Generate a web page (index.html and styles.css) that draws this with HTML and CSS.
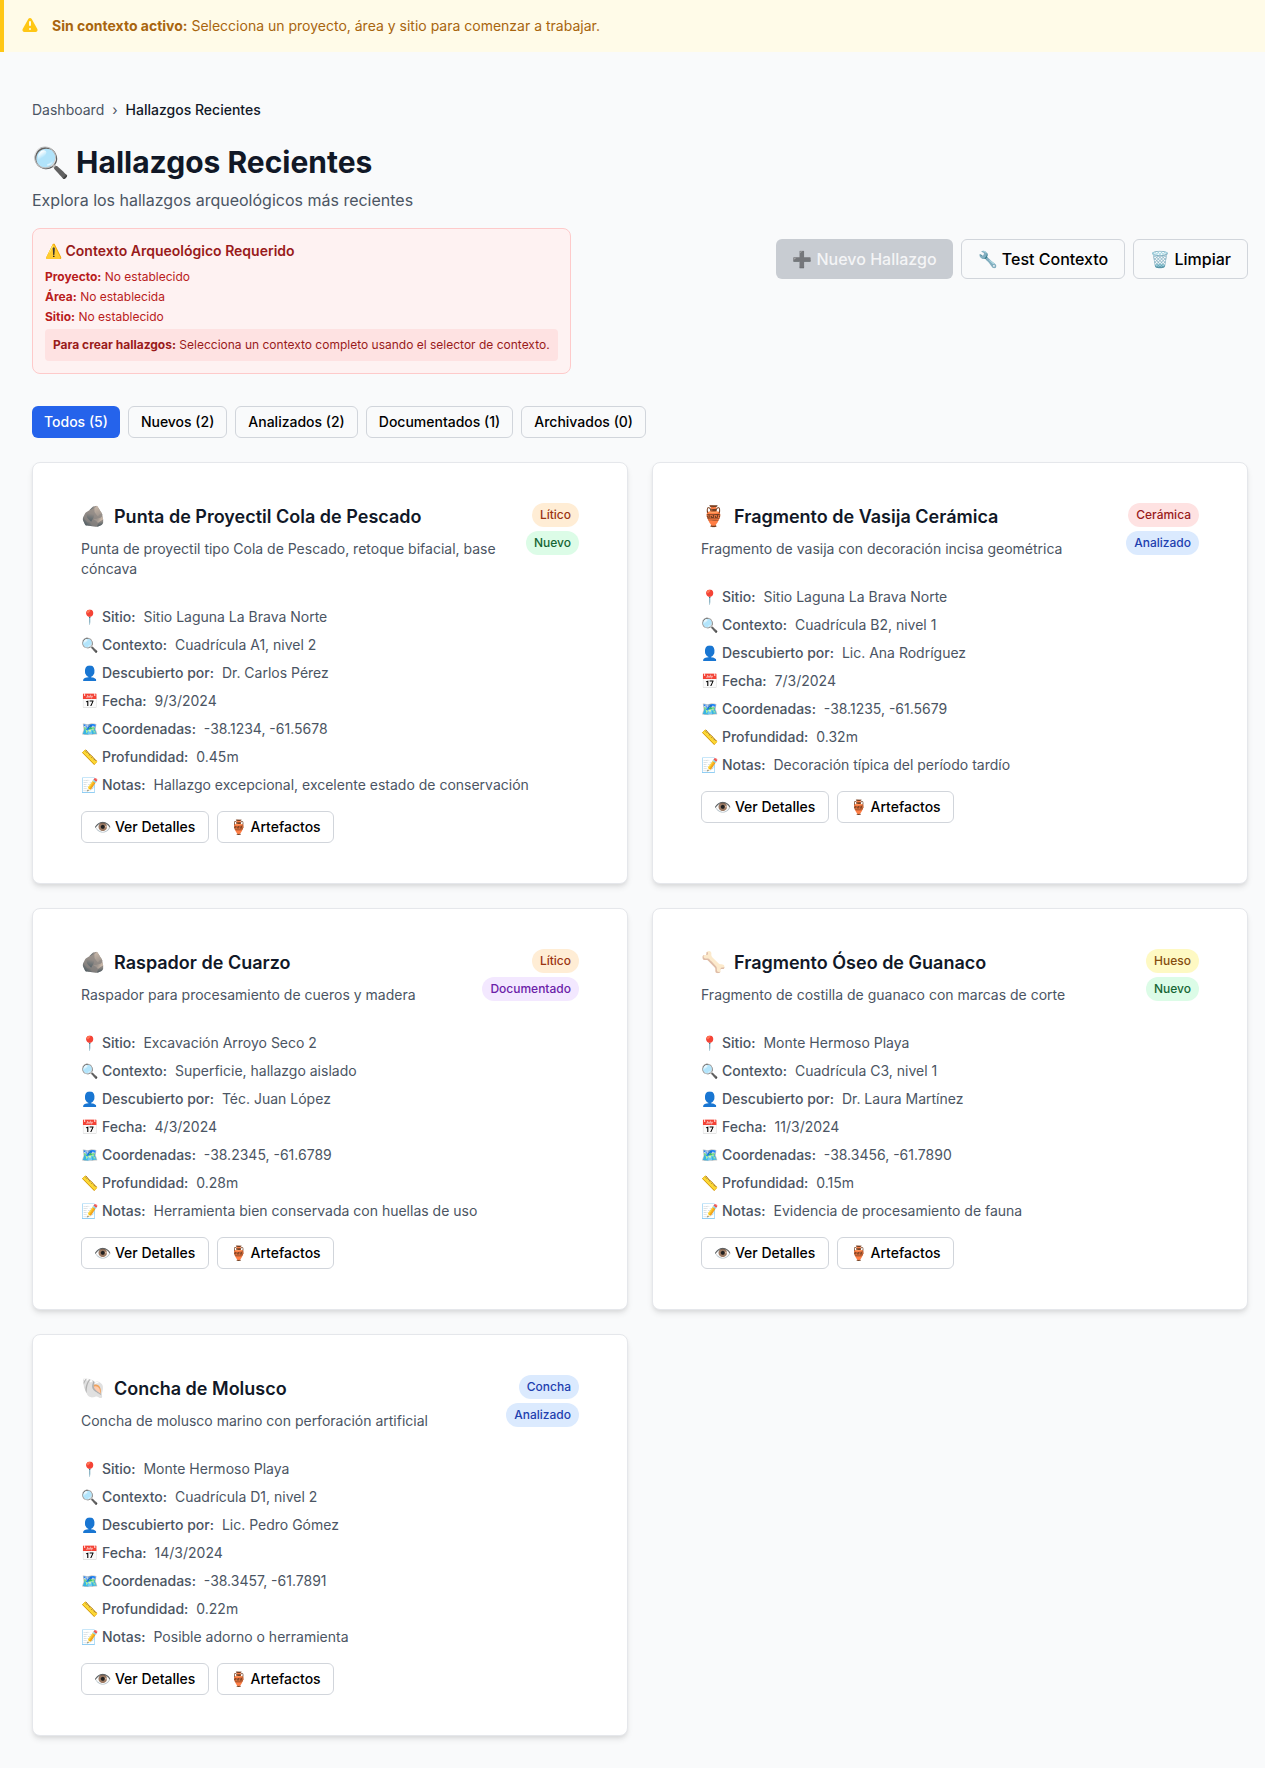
FILE: index.html
```html
<!DOCTYPE html>
<html lang="es">
<head>
<meta charset="utf-8">
<title>Hallazgos Recientes</title>
<link rel="stylesheet" href="styles.css">
</head>
<body>
<div class="banner">
  <svg class="banner-icon" viewBox="0 0 20 20" width="20" height="20"><path fill="#ffc715" d="M8.26 3.1c.76-1.36 2.72-1.36 3.48 0l5.58 9.92c.75 1.34-.21 2.98-1.74 2.98H4.42c-1.53 0-2.49-1.64-1.74-2.98L8.26 3.1zM11 13a1 1 0 1 1-2 0 1 1 0 0 1 2 0zm-1-8a1 1 0 0 0-1 1v3a1 1 0 1 0 2 0V6a1 1 0 0 0-1-1z" fill-rule="evenodd"/></svg>
  <p><strong>Sin contexto activo:</strong> Selecciona un proyecto, área y sitio para comenzar a trabajar.</p>
</div>
<main class="page">
  <nav class="crumbs"><span>Dashboard</span><span class="sep">›</span><span class="current">Hallazgos Recientes</span></nav>
  <header class="head">
    <h1>🔍 Hallazgos Recientes</h1>
    <p class="sub">Explora los hallazgos arqueológicos más recientes</p>
    <div class="head-row">
      <section class="alert">
        <h3>⚠️ Contexto Arqueológico Requerido</h3>
        <p><b>Proyecto:</b> No establecido</p>
        <p><b>Área:</b> No establecida</p>
        <p><b>Sitio:</b> No establecido</p>
        <div class="alert-note"><b>Para crear hallazgos:</b> Selecciona un contexto completo usando el selector de contexto.</div>
      </section>
      <div class="actions">
        <button class="btn-lg disabled"><span class="fade">➕ Nuevo Hallazgo</span></button>
        <button class="btn-lg">🔧 Test Contexto</button>
        <button class="btn-lg">🗑️ Limpiar</button>
      </div>
    </div>
  </header>
  <div class="tabs">
    <button class="tab active">Todos (5)</button>
    <button class="tab">Nuevos (2)</button>
    <button class="tab">Analizados (2)</button>
    <button class="tab">Documentados (1)</button>
    <button class="tab">Archivados (0)</button>
  </div>
  <div class="grid">

    <article class="card">
      <div class="card-head">
        <div class="card-title">
          <h3><span class="ico">🪨</span>Punta de Proyectil Cola de Pescado</h3>
          <p>Punta de proyectil tipo Cola de Pescado, retoque bifacial, base cóncava</p>
        </div>
        <div class="badges"><span class="badge lit">Lítico</span><span class="badge new">Nuevo</span></div>
      </div>
      <ul class="facts">
        <li>📍 <b>Sitio:</b> Sitio Laguna La Brava Norte</li>
        <li>🔍 <b>Contexto:</b> Cuadrícula A1, nivel 2</li>
        <li>👤 <b>Descubierto por:</b> Dr. Carlos Pérez</li>
        <li>📅 <b>Fecha:</b> 9/3/2024</li>
        <li>🗺️ <b>Coordenadas:</b> -38.1234, -61.5678</li>
        <li>📏 <b>Profundidad:</b> 0.45m</li>
        <li>📝 <b>Notas:</b> Hallazgo excepcional, excelente estado de conservación</li>
      </ul>
      <div class="card-actions"><button class="btn-sm">👁️ Ver Detalles</button><button class="btn-sm">🏺 Artefactos</button></div>
    </article>

    <article class="card">
      <div class="card-head">
        <div class="card-title">
          <h3><span class="ico">🏺</span>Fragmento de Vasija Cerámica</h3>
          <p>Fragmento de vasija con decoración incisa geométrica</p>
        </div>
        <div class="badges"><span class="badge cer">Cerámica</span><span class="badge ana">Analizado</span></div>
      </div>
      <ul class="facts">
        <li>📍 <b>Sitio:</b> Sitio Laguna La Brava Norte</li>
        <li>🔍 <b>Contexto:</b> Cuadrícula B2, nivel 1</li>
        <li>👤 <b>Descubierto por:</b> Lic. Ana Rodríguez</li>
        <li>📅 <b>Fecha:</b> 7/3/2024</li>
        <li>🗺️ <b>Coordenadas:</b> -38.1235, -61.5679</li>
        <li>📏 <b>Profundidad:</b> 0.32m</li>
        <li>📝 <b>Notas:</b> Decoración típica del período tardío</li>
      </ul>
      <div class="card-actions"><button class="btn-sm">👁️ Ver Detalles</button><button class="btn-sm">🏺 Artefactos</button></div>
    </article>

    <article class="card">
      <div class="card-head">
        <div class="card-title">
          <h3><span class="ico">🪨</span>Raspador de Cuarzo</h3>
          <p>Raspador para procesamiento de cueros y madera</p>
        </div>
        <div class="badges"><span class="badge lit">Lítico</span><span class="badge doc">Documentado</span></div>
      </div>
      <ul class="facts">
        <li>📍 <b>Sitio:</b> Excavación Arroyo Seco 2</li>
        <li>🔍 <b>Contexto:</b> Superficie, hallazgo aislado</li>
        <li>👤 <b>Descubierto por:</b> Téc. Juan López</li>
        <li>📅 <b>Fecha:</b> 4/3/2024</li>
        <li>🗺️ <b>Coordenadas:</b> -38.2345, -61.6789</li>
        <li>📏 <b>Profundidad:</b> 0.28m</li>
        <li>📝 <b>Notas:</b> Herramienta bien conservada con huellas de uso</li>
      </ul>
      <div class="card-actions"><button class="btn-sm">👁️ Ver Detalles</button><button class="btn-sm">🏺 Artefactos</button></div>
    </article>

    <article class="card">
      <div class="card-head">
        <div class="card-title">
          <h3><span class="ico">🦴</span>Fragmento Óseo de Guanaco</h3>
          <p>Fragmento de costilla de guanaco con marcas de corte</p>
        </div>
        <div class="badges"><span class="badge hue">Hueso</span><span class="badge new">Nuevo</span></div>
      </div>
      <ul class="facts">
        <li>📍 <b>Sitio:</b> Monte Hermoso Playa</li>
        <li>🔍 <b>Contexto:</b> Cuadrícula C3, nivel 1</li>
        <li>👤 <b>Descubierto por:</b> Dr. Laura Martínez</li>
        <li>📅 <b>Fecha:</b> 11/3/2024</li>
        <li>🗺️ <b>Coordenadas:</b> -38.3456, -61.7890</li>
        <li>📏 <b>Profundidad:</b> 0.15m</li>
        <li>📝 <b>Notas:</b> Evidencia de procesamiento de fauna</li>
      </ul>
      <div class="card-actions"><button class="btn-sm">👁️ Ver Detalles</button><button class="btn-sm">🏺 Artefactos</button></div>
    </article>

    <article class="card">
      <div class="card-head">
        <div class="card-title">
          <h3><span class="ico">🐚</span>Concha de Molusco</h3>
          <p>Concha de molusco marino con perforación artificial</p>
        </div>
        <div class="badges"><span class="badge ana">Concha</span><span class="badge ana">Analizado</span></div>
      </div>
      <ul class="facts">
        <li>📍 <b>Sitio:</b> Monte Hermoso Playa</li>
        <li>🔍 <b>Contexto:</b> Cuadrícula D1, nivel 2</li>
        <li>👤 <b>Descubierto por:</b> Lic. Pedro Gómez</li>
        <li>📅 <b>Fecha:</b> 14/3/2024</li>
        <li>🗺️ <b>Coordenadas:</b> -38.3457, -61.7891</li>
        <li>📏 <b>Profundidad:</b> 0.22m</li>
        <li>📝 <b>Notas:</b> Posible adorno o herramienta</li>
      </ul>
      <div class="card-actions"><button class="btn-sm">👁️ Ver Detalles</button><button class="btn-sm">🏺 Artefactos</button></div>
    </article>

  </div>
</main>
</body>
</html>
```

FILE: styles.css
```css
* { box-sizing: border-box; }
html, body { margin: 0; padding: 0; }
body {
  background: #f9fafb;
  color: #111827;
  font-family: Inter, "Noto Sans", sans-serif;
  font-size: 16px;
  line-height: 24px;
}
button { font-family: inherit; cursor: pointer; color: #000; }
p, h1, h3, ul { margin: 0; padding: 0; }

.banner {
  display: flex;
  align-items: center;
  gap: 12px;
  height: 52px;
  padding-left: 16px;
  background: #fffbe8;
  border-left: 4px solid #ffc715;
  color: #a8650e;
  font-size: 14px;
  line-height: 20px;
}
.banner-icon { flex: none; }
.banner strong { font-weight: 700; }

.page { padding: 48px 17px 32px 32px; }

.crumbs {
  display: flex;
  align-items: center;
  gap: 8px;
  font-size: 14px;
  line-height: 20px;
  color: #4b5563;
}
.crumbs .current { color: #111827; font-weight: 500; }

.head h1 {
  margin-top: 24px;
  font-size: 30px;
  line-height: 36px;
  font-weight: 700;
  color: #111827;
}
.sub { margin-top: 8px; color: #4b5563; }
.head-row {
  display: flex;
  justify-content: space-between;
  align-items: flex-start;
  margin-top: 16px;
}
.alert {
  width: 539px;
  padding: 12px;
  background: #fef2f2;
  border: 1px solid #fecaca;
  border-radius: 8px;
  color: #b91c1c;
  font-size: 12px;
  line-height: 16px;
}
.alert h3 {
  font-size: 14px;
  line-height: 20px;
  font-weight: 600;
  color: #991b1b;
  margin-bottom: 8px;
}
.alert p { margin-bottom: 4px; }
.alert b { font-weight: 700; }
.alert-note {
  margin-top: 4px;
  padding: 8px;
  background: #fee2e2;
  border-radius: 4px;
  color: #991b1b;
}
.actions { display: flex; gap: 8px; margin-top: 11px; }
.btn-lg {
  height: 40px;
  padding: 0 16px;
  background: #f9fafb;
  border: 1px solid #d1d5db;
  border-radius: 6px;
  font-size: 16px;
  font-weight: 500;
}
.btn-lg.disabled { background: #c8ccd2; border: none; }
.fade { color: #fff; opacity: .8; }

.tabs { display: flex; gap: 8px; margin-top: 32px; }
.tab {
  height: 32px;
  padding: 0 12px 2px;
  background: #f9fafb;
  border: 1px solid #d1d5db;
  border-radius: 6px;
  font-size: 14px;
  font-weight: 500;
}
.tab.active { background: #2563eb; border: none; color: #fff; }

.grid {
  display: grid;
  grid-template-columns: 1fr 1fr;
  gap: 24px;
  margin-top: 24px;
}
.card {
  padding: 40px 48px;
  background: #fff;
  border: 1px solid #e5e7eb;
  border-radius: 8px;
  box-shadow: 0 4px 6px -1px rgba(0,0,0,.1), 0 2px 4px -1px rgba(0,0,0,.06);
}
.card-head { display: flex; justify-content: space-between; align-items: flex-start; gap: 16px; }
.card-title h3 {
  font-size: 18px;
  line-height: 26px;
  font-weight: 600;
  color: #111827;
  margin-bottom: 9px;
}
.card-title .ico { margin-right: 8px; font-size: 20px; }
.card-title p { font-size: 14px; line-height: 20px; color: #4b5563; }
.badges { display: flex; flex-direction: column; align-items: flex-end; gap: 4px; flex: none; }
.badge {
  padding: 4px 8px;
  border-radius: 999px;
  font-size: 12px;
  line-height: 16px;
  font-weight: 500;
}
.lit { background: #ffedd5; color: #9a3412; }
.cer { background: #fee2e2; color: #991b1b; }
.new { background: #dcfce7; color: #166534; }
.ana { background: #dbeafe; color: #1e40af; }
.doc { background: #f3e8ff; color: #6b21a8; }
.hue { background: #fef9c3; color: #854d0e; }

.facts { list-style: none; margin-top: 28px; }
.facts li { font-size: 14px; line-height: 20px; margin-bottom: 8px; color: #4b5563; }
.facts b { font-weight: 500; color: #4b5563; margin-right: 4px; }
.card-actions { display: flex; gap: 8px; margin-top: 16px; }
.btn-sm {
  height: 32px;
  padding: 0 12.2px 2px;
  background: #fff;
  border: 1px solid #d1d5db;
  border-radius: 6px;
  font-size: 14px;
  font-weight: 500;
}
```
